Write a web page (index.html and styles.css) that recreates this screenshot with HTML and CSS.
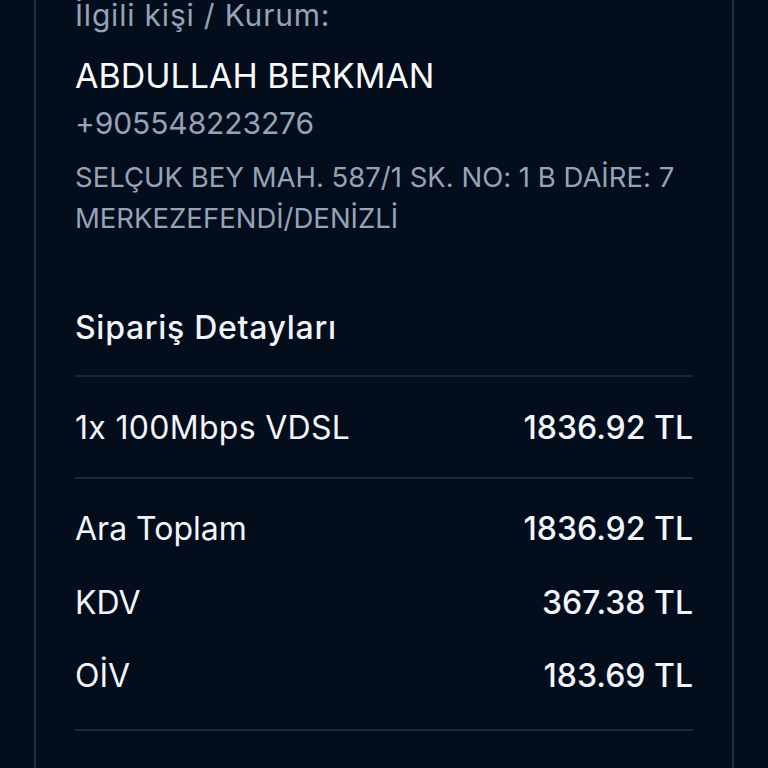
FILE: index.html
```html
<!DOCTYPE html>
<html lang="tr">
<head>
<meta charset="utf-8">
<link rel="stylesheet" href="styles.css">
</head>
<body>
<div class="page">
  <div class="card">
    <div class="contact">
      <div class="label">İlgili kişi / Kurum:</div>
      <div class="name">ABDULLAH BERKMAN</div>
      <div class="phone">+905548223276</div>
      <div class="address">SELÇUK BEY MAH. 587/1 SK. NO: 1 B DAİRE: 7<br>MERKEZEFENDİ/DENİZLİ</div>
    </div>
    <div class="details">
      <h2 class="title">Sipariş Detayları</h2>
      <div class="items">
        <div class="row"><span class="item-name">1x 100Mbps VDSL</span><span class="amount">1836.92 TL</span></div>
      </div>
      <div class="totals">
        <div class="row"><span>Ara Toplam</span><span class="amount">1836.92 TL</span></div>
        <div class="row"><span>KDV</span><span class="amount">367.38 TL</span></div>
        <div class="row"><span>OİV</span><span class="amount">183.69 TL</span></div>
      </div>
    </div>
  </div>
</div>
</body>
</html>
```
FILE: styles.css
```css
html, body {
  margin: 0;
  padding: 0;
  background: #040d1b;
}
body {
  font-family: Inter, "Noto Sans", sans-serif;
  font-feature-settings: "calt" 0;
  color: #f1f5f9;
  width: 768px;
  height: 768px;
  overflow: hidden;
}
.page {
  padding: 0 34px;
}
.card {
  border-left: 2px solid #222c3a;
  border-right: 2px solid #222c3a;
  padding: 0 39px;
  margin-top: -5px;
  height: 800px;
}
.contact {
  display: flex;
  flex-direction: column;
}
.label {
  color: #94a3b8;
  font-size: 30px;
  letter-spacing: 0.8px;
  line-height: 40px;
}
.name {
  color: #f8fafc;
  font-size: 34px;
  line-height: 40px;
  margin-top: 21px;
}
.phone {
  color: #94a3b8;
  font-size: 30px;
  letter-spacing: -0.1px;
  line-height: 40px;
  margin-top: 7px;
}
.address {
  color: #94a3b8;
  font-size: 27.5px;
  line-height: 41px;
  margin-top: 14px;
}
.details {
  margin-top: 69px;
}
.title {
  margin: 0;
  font-size: 32px;
  font-weight: 500;
  letter-spacing: 0.7px;
  line-height: 40px;
  padding-bottom: 27px;
  border-bottom: 2px solid #1c2634;
}
.row {
  display: flex;
  justify-content: space-between;
  font-size: 32px;
  line-height: 40px;
}
.item-name {
  letter-spacing: 0.3px;
}
.amount {
  font-weight: 500;
}
.items {
  padding: 31px 0 29px;
  border-bottom: 2px solid #1c2634;
}
.totals {
  display: flex;
  flex-direction: column;
  gap: 33.5px;
  padding: 30px 0 33px;
  border-bottom: 2px solid #1c2634;
}
```
